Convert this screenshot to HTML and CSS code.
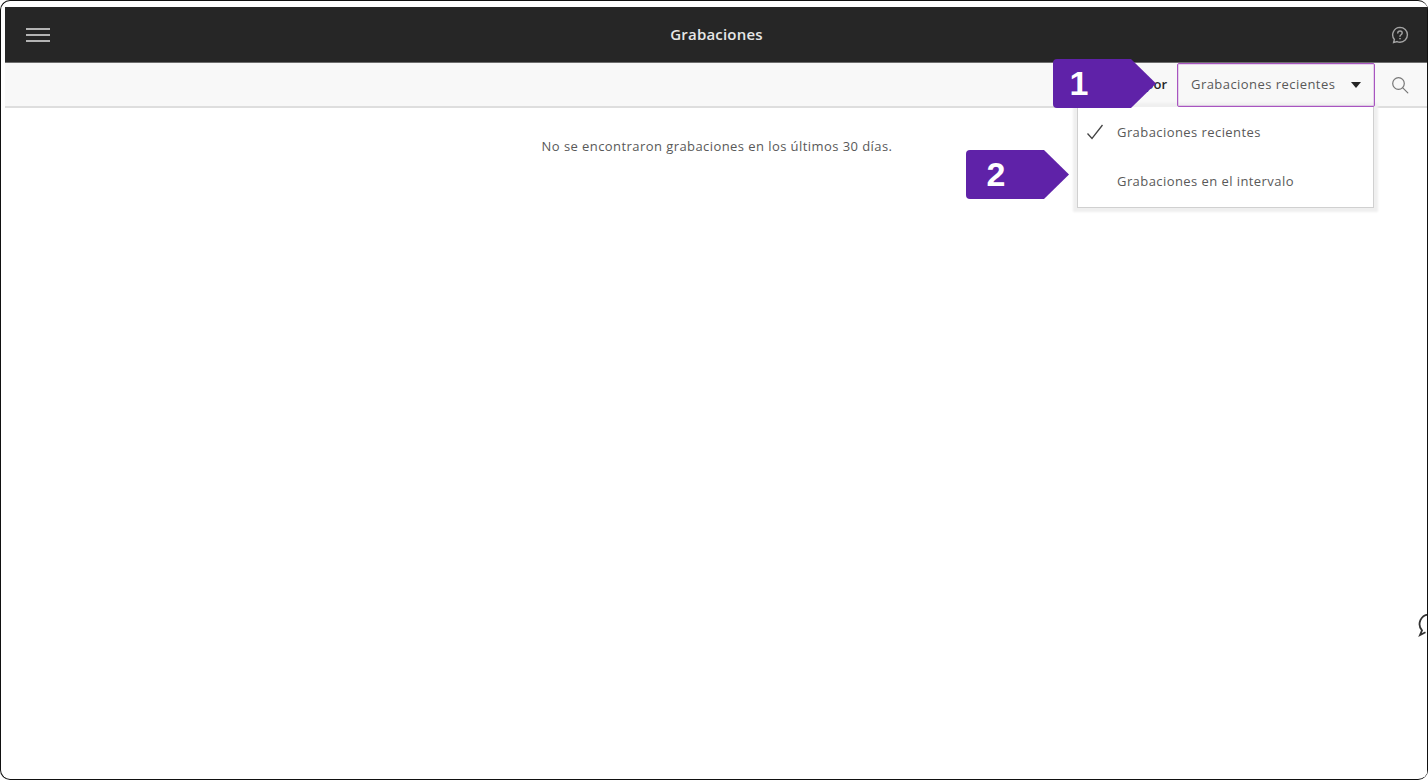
FILE: index.html
```html
<!DOCTYPE html>
<html lang="es">
<head>
  <meta charset="UTF-8">
  <meta name="viewport" content="width=device-width, initial-scale=1.0">
  <title>Grabaciones</title>
  <link rel="stylesheet" href="styles.css">
</head>
<body>
  <div class="frame">
    <header class="topbar">
      <button class="menu-btn" aria-label="Menú">
        <span></span><span></span><span></span>
      </button>
      <h1 class="title">Grabaciones</h1>
      <svg class="help-icon" width="18" height="18" viewBox="0 0 18 18" fill="none" stroke="#a3a3a3" stroke-width="1.400">
        <path d="M9 1.400a7.400 7.400 0 0 1 0 14.800c-1 0-2-.2-2.900-.6L2.600 16.600l.8-3.100A7.400 7.400 0 0 1 9 1.400z"/>
        <path d="M6.800 7.100c0-1.300 1-2.100 2.200-2.100s2.200.8 2.200 2c0 1.800-2.200 1.700-2.200 3.300" stroke-linecap="round"/>
        <path d="M9 12v1.300" stroke-width="1.600"/>
      </svg>
    </header>

    <div class="toolbar">
      <span class="filter-label">Filtrar por</span>
      <div class="select">
        <span>Grabaciones recientes</span>
        <i class="caret"></i>
      </div>
      <svg class="search-icon" width="18" height="18" viewBox="0 0 18 18" fill="none" stroke="#777" stroke-width="1.200">
        <circle cx="7.500" cy="7.500" r="5.800"/>
        <path d="M11.800 11.800l5 5" stroke-linecap="round"/>
      </svg>
    </div>

    <main class="content">
      <p class="empty">No se encontraron grabaciones en los últimos 30 días.</p>
    </main>

    <ul class="dropdown">
      <li class="dropdown-item">
        <svg class="check" width="18" height="16" viewBox="0 0 18 16" fill="none" stroke="#444" stroke-width="1.300">
          <path d="M1.500 9.500l4.500 5L16.500 1"/>
        </svg>
        Grabaciones recientes
      </li>
      <li class="dropdown-item">Grabaciones en el intervalo</li>
    </ul>

    <div class="callout callout-1">
      <svg width="103" height="49" viewBox="0 0 103 49">
        <path d="M4 0H78L103 24.500 78 49H4a4 4 0 0 1-4-4V4a4 4 0 0 1 4-4z" fill="#5f22a8"/>
      </svg>
      <span class="callout-num">1</span>
    </div>
    <div class="callout callout-2">
      <svg width="103" height="49" viewBox="0 0 103 49">
        <path d="M4 0H78L103 24.500 78 49H4a4 4 0 0 1-4-4V4a4 4 0 0 1 4-4z" fill="#5f22a8"/>
      </svg>
      <span class="callout-num">2</span>
    </div>

    <svg class="chat-icon" width="20" height="24" viewBox="0 0 20 24" fill="none" stroke="#333" stroke-width="1.800">
      <path d="M11 1.500a9.500 9.500 0 0 0-7 15.800L2 22l5.500-2.800"/>
    </svg>
  </div>
</body>
</html>
```

FILE: styles.css
```css
* {
  box-sizing: border-box;
}

html, body {
  margin: 0;
  height: 100%;
  background: #fff;
  overflow: hidden;
}

body {
  font-family: 'Open Sans', 'Noto Sans', sans-serif;
  color: #595959;
}

.frame {
  position: relative;
  width: 1428px;
  height: 780px;
  padding: 6px 0 0 4px;
  border: 1px solid #111;
  border-right: none;
  border-radius: 10px;
  overflow: hidden;
  display: flex;
  flex-direction: column;
}

.frame::after {
  content: '';
  position: absolute;
  top: 0;
  bottom: 0;
  right: 0;
  width: 1px;
  background: #111;
}

.topbar {
  height: 56px;
  flex: none;
  background: #262626;
  border-bottom: 1px solid #6e6e6e;
  display: flex;
  align-items: center;
  justify-content: space-between;
  padding: 0 19px 0 21px;
  position: relative;
}

.menu-btn {
  width: 24px;
  padding: 0;
  border: none;
  background: none;
  display: flex;
  flex-direction: column;
  gap: 4px;
}

.menu-btn span {
  display: block;
  height: 2px;
  background: #b4b4b4;
}

.title {
  position: absolute;
  left: 0;
  right: 0;
  margin: 0 0 2px;
  text-align: center;
  font-size: 15px;
  font-weight: 600;
  letter-spacing: 0.2px;
  color: #e6e6e6;
}

.help-icon {
  position: relative;
}

.toolbar {
  height: 45px;
  flex: none;
  background: #f8f8f8;
  border-bottom: 2px solid #dedede;
  display: flex;
  align-items: stretch;
  justify-content: flex-end;
  padding-right: 19px;
}

.filter-label {
  align-self: center;
  margin: 0 10px 2px 0;
  font-size: 13px;
  font-weight: 600;
  color: #262626;
}

.select {
  position: relative;
  z-index: 1;
  width: 198px;
  height: 44px;
  border: 1px solid #a855c0;
  box-shadow: inset 0 0 0 1px rgba(171, 95, 196, 0.25);
  border-radius: 2px;
  padding: 0 13px 2px 13px;
  display: flex;
  align-items: center;
  justify-content: space-between;
  font-size: 13px;
  letter-spacing: 0.45px;
}

.caret {
  width: 0;
  height: 0;
  margin-top: 2px;
  border-left: 5.500px solid transparent;
  border-right: 5.500px solid transparent;
  border-top: 6px solid #262626;
}

.search-icon {
  align-self: center;
  margin-left: 16px;
}

.content {
  flex: 1;
}

.empty {
  margin: 28px 0 0;
  padding-left: 1px;
  text-align: center;
  font-size: 13px;
  letter-spacing: 0.43px;
  line-height: 20px;
}

.dropdown {
  position: absolute;
  top: 106px;
  left: 1076px;
  width: 297px;
  height: 101px;
  margin: 0;
  padding: 0;
  list-style: none;
  background: #fff;
  border: 1px solid #d0d0d0;
  border-top: none;
  box-shadow: 0 0 2px 4px #efefef;
}

.dropdown-item {
  position: relative;
  height: 49px;
  padding-left: 39px;
  display: flex;
  align-items: center;
  font-size: 13px;
  letter-spacing: 0.43px;
}

.check {
  position: absolute;
  left: 8px;
  top: 17px;
}

.callout {
  position: absolute;
  z-index: 2;
  width: 103px;
  height: 49px;
}

.callout svg {
  display: block;
}

.callout-1 {
  top: 58px;
  left: 1052px;
}

.callout-2 {
  top: 149px;
  left: 965px;
}

.callout-num {
  position: absolute;
  top: 0;
  left: 0;
  width: 52px;
  line-height: 49px;
  text-align: center;
  font-family: 'Liberation Sans', Arial, sans-serif;
  font-size: 34px;
  font-weight: 700;
  color: #fff;
}

.callout-2 .callout-num {
  left: 4px;
}

.chat-icon {
  position: absolute;
  top: 612px;
  right: -10px;
}
```
